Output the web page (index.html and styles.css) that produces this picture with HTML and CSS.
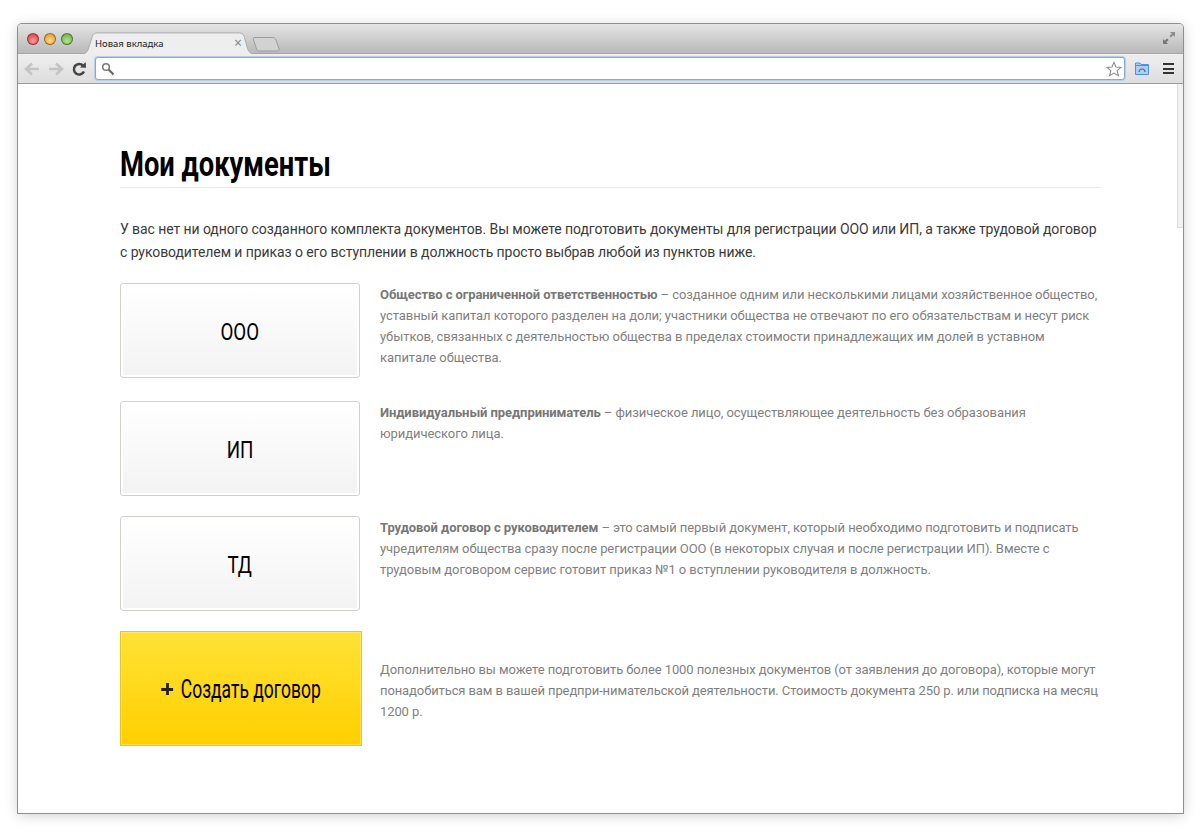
FILE: index.html
```html
<!DOCTYPE html>
<html lang="ru">
<head>
    <meta charset="UTF-8">
    <meta name="viewport" content="width=device-width, initial-scale=1.0">
    <title>Мои документы</title>
    <link rel="stylesheet" href="styles.css">
</head>
<body>
    <div class="browser">
        <div class="tabbar">
            <div class="lights">
                <span class="light light-red"></span>
                <span class="light light-yellow"></span>
                <span class="light light-green"></span>
            </div>
            <div class="tab">
                <svg class="tab-shape" width="174" height="22" viewBox="0 0 174 24" preserveAspectRatio="none">
                    <path d="M0 24 C4 24 5.500 21 6.500 18 L10 6 C11 2 12.500 1 16 1 L156 1 C160 1 161.500 2 162.500 6 L165.500 18 C166.500 21 168 24 173 24" fill="#eeeeee" stroke="#a9a9a9"/>
                </svg>
                <span class="tab-title">Новая вкладка</span>
                <span class="tab-close">×</span>
            </div>
            <svg class="new-tab" width="30" height="16" viewBox="0 0 30 16">
                <path d="M4 1.500 L21 1.500 C23 1.500 24 2 25 4 L28 13 C28.500 14.500 27.500 15 26 15 L9 15 C7 15 6 14.500 5.500 13 L2.500 4 C2 2 2.500 1.500 4 1.500 Z" fill="#d2d2d2" stroke="#9c9c9c"/>
            </svg>
            <svg class="fullscreen" width="14" height="14" viewBox="0 0 14 14">
                <path d="M8 1 H13 V6 L11.300 4.300 L9 6.600 L7.400 5 L9.700 2.700 Z" fill="#8d8d8d"/>
                <path d="M1 8 L2.700 9.700 L5 7.400 L6.600 9 L4.300 11.300 L6 13 H1 Z" fill="#777"/>
            </svg>
        </div>
        <div class="toolbar">
            <svg class="nav-icon" width="18" height="16" viewBox="0 0 18 16">
                <path d="M16 8 H4 M9 2.500 L3 8 L9 13.500" fill="none" stroke="#c4c4c4" stroke-width="2.600"/>
            </svg>
            <svg class="nav-icon" width="18" height="16" viewBox="0 0 18 16">
                <path d="M2 8 H14 M9 2.500 L15 8 L9 13.500" fill="none" stroke="#c4c4c4" stroke-width="2.600"/>
            </svg>
            <svg class="nav-icon" width="16" height="16" viewBox="0 0 16 16">
                <path d="M13 10.500 A5.300 5.300 0 1 1 12 4.500" fill="none" stroke="#444" stroke-width="2.500"/>
                <path d="M9 6.500 L15 6.800 L14.700 1 Z" fill="#444"/>
            </svg>
            <div class="omnibox">
                <svg width="14" height="14" viewBox="0 0 14 14">
                    <circle cx="5" cy="5" r="3.300" fill="none" stroke="#777" stroke-width="1.500"/>
                    <path d="M7.800 7.800 L12.500 12.500" stroke="#666" stroke-width="2.200"/>
                </svg>
                <svg class="star" width="16" height="16" viewBox="0 0 18 18">
                    <path d="M9 1.500 L11.200 6.800 L17 7.200 L12.500 10.900 L14 16.500 L9 13.500 L4 16.500 L5.500 10.900 L1 7.200 L6.800 6.800 Z" fill="#fff" stroke="#8a8a8a" stroke-width="1.200"/>
                </svg>
            </div>
            <svg class="folder" width="14" height="13" viewBox="0 0 14 13">
                <path d="M0.500 1 H5 L6 2.500 H13.500 V12.500 H0.500 Z" fill="#a9cdf5" stroke="#4d8fe0"/>
                <path d="M1 3.500 H13" stroke="#4d8fe0"/>
                <path d="M4 10 A3 3 0 0 1 10 10" fill="none" stroke="#5a6a80" stroke-width="1.200"/>
            </svg>
            <div class="menu"><span></span><span></span><span></span></div>
        </div>
        <div class="page">
            <div class="scroll-thumb"></div>
            <h1><span class="title-text">Мои документы</span></h1>
            <p class="intro">У вас нет ни одного созданного комплекта документов. Вы можете подготовить документы для регистрации ООО или ИП, а также трудовой договор с руководителем и приказ о его вступлении в должность просто выбрав любой из пунктов ниже.</p>
            <div class="doc-row">
                <a class="doc-btn" href="#"><span class="btn-label">ООО</span></a>
                <p class="doc-text"><b>Общество с ограниченной ответственностью</b> – созданное одним или несколькими лицами хозяйственное общество, уставный капитал которого разделен на доли; участники общества не отвечают по его обязательствам и несут риск убытков, связанных с деятельностью общества в пределах стоимости принадлежащих им долей в уставном капитале общества.</p>
            </div>
            <div class="doc-row row-ip">
                <a class="doc-btn" href="#"><span class="btn-label">ИП</span></a>
                <p class="doc-text"><b>Индивидуальный предприниматель</b> – физическое лицо, осуществляющее деятельность без образования юридического лица.</p>
            </div>
            <div class="doc-row row-td">
                <a class="doc-btn" href="#"><span class="btn-label">ТД</span></a>
                <p class="doc-text"><b>Трудовой договор с руководителем</b> – это самый первый документ, который необходимо подготовить и подписать учредителям общества сразу после регистрации ООО (в некоторых случая и после регистрации ИП). Вместе с трудовым договором сервис готовит приказ №1 о вступлении руководителя в должность.</p>
            </div>
            <div class="doc-row row-create">
                <a class="create-btn" href="#"><span class="create-label"><span class="plus"></span>Создать договор</span></a>
                <p class="doc-text">Дополнительно вы можете подготовить более 1000 полезных документов (от заявления до договора), которые могут понадобиться вам в вашей предпри-нимательской деятельности. Стоимость документа 250 р. или подписка на месяц 1200 р.</p>
            </div>
        </div>
    </div>
</body>
</html>
```

FILE: styles.css
```css
body {
    margin: 0;
    height: 829px;
    overflow: hidden;
    background-color: #fff;
    font-family: Roboto, sans-serif;
}
.browser {
    width: 1165px;
    height: 789px;
    margin: 24px 0 0 18px;
    border-radius: 4px 4px 0 0;
    box-shadow: 0 0 0 1px #8f8f8f, 0 2px 14px rgba(0,0,0,0.2);
    background-color: #fff;
    overflow: hidden;
}
.tabbar {
    height: 30px;
    display: flex;
    align-items: flex-end;
    position: relative;
    box-sizing: border-box;
    background: linear-gradient(#e4e4e4, #b9b9b9);
    border-bottom: 1px solid #a8a8a8;
}
.lights {
    display: flex;
    gap: 5px;
    margin: 0 0 8px 9px;
}
.light {
    width: 10px;
    height: 10px;
    border-radius: 50%;
    border: 0.5px solid rgba(0,0,0,0.4);
}
.light-red { background: radial-gradient(circle at 50% 70%, #ff9a9a, #d8333a); }
.light-yellow { background: radial-gradient(circle at 50% 70%, #ffd887, #dd9420); }
.light-green { background: radial-gradient(circle at 50% 70%, #b7e58c, #5ea83a); }
.tab {
    width: 174px;
    height: 22px;
    margin: 0 0 -1px 9px;
    position: relative;
    display: flex;
    align-items: center;
    font-family: "Noto Sans", sans-serif;
    font-size: 9.500px;
    color: #222;
}
.tab-shape {
    position: absolute;
    left: 0;
    top: 0;
}
.tab-title {
    position: relative;
    margin-left: 13px;
}
.tab-close {
    position: absolute;
    left: 152px;
    top: 1px;
    font-size: 14px;
    color: #888;
}
.new-tab {
    margin: 0 0 1px -5px;
}
.fullscreen {
    position: absolute;
    right: 7px;
    top: 7px;
}
.toolbar {
    height: 30px;
    box-sizing: border-box;
    display: flex;
    align-items: center;
    padding-left: 5px;
    background: linear-gradient(#eeeeee, #dedede);
    border-bottom: 1px solid #9d9d9d;
}
.nav-icon {
    margin-right: 6px;
}
.omnibox {
    width: 1030px;
    height: 23px;
    margin-left: 2px;
    box-sizing: border-box;
    display: flex;
    align-items: center;
    justify-content: space-between;
    padding: 0 2px 0 5px;
    background-color: #fff;
    border: 1px solid #86a9d6;
    border-radius: 3px;
    box-shadow: 0 0 0 1px #b9cde6;
}
.folder {
    margin-left: 10px;
}
.menu {
    display: flex;
    flex-direction: column;
    gap: 2.500px;
    margin-left: 14px;
}
.menu span {
    width: 11px;
    height: 2px;
    background-color: #333;
}
.page {
    height: 729px;
    position: relative;
    box-sizing: border-box;
    padding: 60px 83px 0 102px;
    color: #3a3a3a;
}
.scroll-thumb {
    position: absolute;
    right: 0;
    top: 0;
    width: 6px;
    height: 144px;
    background-color: #f2f2f2;
    border-left: 1px solid #ddd;
    border-bottom: 1px solid #ddd;
    box-sizing: border-box;
}
h1 {
    margin: 0;
    padding-bottom: 2px;
    font-size: 35px;
    line-height: 41px;
    font-weight: 700;
    color: #000;
    border-bottom: 1px solid #e8e8e8;
}
.title-text {
    display: inline-block;
    transform: scaleX(0.78);
    transform-origin: left;
    white-space: nowrap;
}
.intro {
    margin: 30px 0 19px;
    font-size: 14px;
    line-height: 23px;
    letter-spacing: -0.08px;
}
.doc-row {
    display: flex;
    align-items: flex-start;
    gap: 20px;
}
.row-ip {
    margin-top: 23px;
}
.row-td, .row-create {
    margin-top: 20px;
}
.row-create {
    align-items: center;
}
.doc-btn {
    flex: none;
    width: 240px;
    height: 95px;
    box-sizing: border-box;
    padding-top: 2px;
    display: flex;
    align-items: center;
    justify-content: center;
    background: linear-gradient(#fff, #f3f3f3);
    border: 1px solid #d2d2cd;
    border-radius: 3px;
    box-shadow: inset 0 0 0 2px #fff;
    font-size: 24px;
    color: #000;
    text-decoration: none;
}
.btn-label {
    transform: scaleX(0.78);
}
.doc-text {
    margin: 0;
    padding-top: 1px;
    font-size: 13px;
    line-height: 21px;
    color: #7f7f7f;
    letter-spacing: -0.07px;
}
.row-create .doc-text {
    padding-top: 4px;
    letter-spacing: -0.1px;
}
.doc-text b {
    color: #777;
}
.create-btn {
    flex: none;
    width: 242px;
    height: 115px;
    margin-right: -2px;
    box-sizing: border-box;
    padding-top: 1px;
    display: flex;
    align-items: center;
    justify-content: center;
    background: linear-gradient(#ffe236, #ffcf00);
    border: 1px solid #e9c520;
    box-shadow: inset 0 0 0 1px rgba(255,255,255,0.25);
    font-size: 25px;
    color: #000;
    text-decoration: none;
}
.create-label {
    display: flex;
    align-items: center;
    gap: 11px;
    flex: none;
    white-space: nowrap;
    transform: scaleX(0.7);
}
.plus {
    width: 17px;
    height: 12px;
    background: linear-gradient(#222, #222) center / 17px 3px no-repeat, linear-gradient(#222, #222) center / 4px 12px no-repeat;
}
```
